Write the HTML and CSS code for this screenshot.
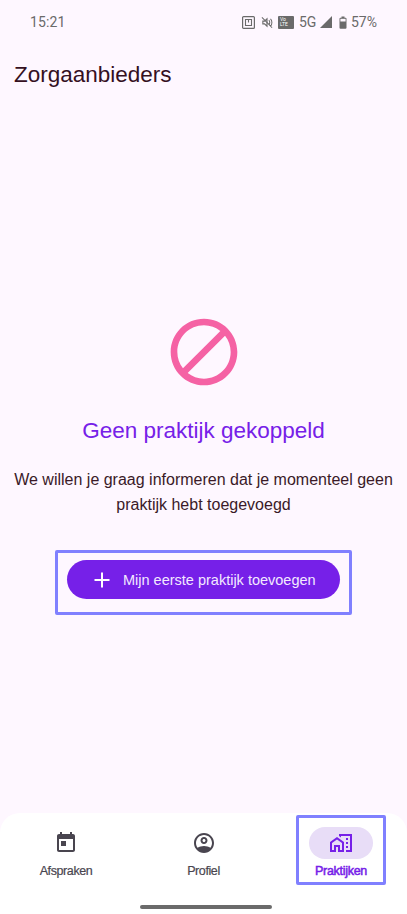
FILE: index.html
```html
<!DOCTYPE html>
<html lang="nl">
<head>
<meta charset="utf-8">
<title>Zorgaanbieders</title>
<link rel="stylesheet" href="styles.css">
</head>
<body>
<div class="app">
  <div class="status">
    <span class="time">15:21</span>
    <div class="status-icons">
      <svg class="si-nfc" width="13" height="13" viewBox="0 0 13 13"><rect x="0.6" y="0.6" width="11.8" height="11.8" rx="1" fill="none" stroke="#6a6a6a" stroke-width="1.2"/><path d="M3.500 3.500h6v6h-6zM6.500 3.500v3" fill="none" stroke="#6a6a6a" stroke-width="1.100"/></svg>
      <svg class="si-mute" width="12" height="13" viewBox="0 0 13 13"><path d="M2 5h1.800l2.700-2.500v8L3.800 8H2z" fill="none" stroke="#6a6a6a" stroke-width="1.200"/><path d="M8.500 4c1.300 1.200 1.300 3.800 0 5M10.300 2.500c2 2 2 6 0 8M1 1l11 11" fill="none" stroke="#6a6a6a" stroke-width="1.100"/></svg>
      <span class="volte"><span>Vo</span><span>LTE</span></span>
      <span class="net">5G</span>
      <svg class="si-signal" width="12" height="12" viewBox="0 0 12 12"><path d="M0 12L12 0v12z" fill="#6a6a6a"/></svg>
      <svg class="si-batt" width="8" height="13" viewBox="0 0 8 13"><path d="M2.500 0.500h3v1.200h1a1 1 0 0 1 1 1v9a1 1 0 0 1-1 1h-5a1 1 0 0 1-1-1v-9a1 1 0 0 1 1-1h1z" fill="#6a6a6a"/><rect x="1.400" y="2.800" width="5.200" height="2.700" fill="#fef7ff"/></svg>
      <span class="pct">57%</span>
    </div>
  </div>
  <header class="header">Zorgaanbieders</header>
  <main class="main">
    <svg class="block-icon" viewBox="0 0 24 24"><path d="M12 2C6.480 2 2 6.480 2 12s4.480 10 10 10 10-4.480 10-10S17.520 2 12 2zM4 12c0-4.420 3.580-8 8-8 1.850 0 3.550.63 4.900 1.690L5.690 16.900C4.630 15.550 4 13.850 4 12zm8 8c-1.850 0-3.550-.63-4.900-1.690L18.310 7.100C19.370 8.450 20 10.150 20 12c0 4.420-3.580 8-8 8z"/></svg>
    <h1 class="title">Geen praktijk gekoppeld</h1>
    <p class="text">We willen je graag informeren dat je momenteel geen praktijk hebt toegevoegd</p>
    <div class="highlight-btn">
      <button class="cta">
        <svg class="plus" viewBox="0 0 16 16"><path d="M8 0.500v15M0.500 8h15"/></svg>
        <span>Mijn eerste praktijk toevoegen</span>
      </button>
    </div>
  </main>
  <nav class="nav">
    <div class="tab">
      <div class="pill"><svg class="tab-icon" viewBox="0 0 24 24"><path d="M19 3h-1V1h-2v2H8V1H6v2H5c-1.110 0-1.990.9-1.990 2L3 19c0 1.100.89 2 2 2h14c1.100 0 2-.9 2-2V5c0-1.100-.9-2-2-2zm0 16H5V8h14v11zM7 10h5v5H7z"/></svg></div>
      <span class="label">Afspraken</span>
    </div>
    <div class="tab">
      <div class="pill"><svg class="tab-icon" viewBox="0 0 24 24"><path fill-rule="evenodd" d="M12 2C6.480 2 2 6.480 2 12s4.480 10 10 10 10-4.480 10-10S17.520 2 12 2zm0 2c4.420 0 8 3.580 8 8 0 1.800-.6 3.500-1.600 4.800C16.700 15.700 14.400 15 12 15s-4.700.7-6.400 1.800C4.600 15.500 4 13.800 4 12c0-4.420 3.580-8 8-8zm0 2c-1.930 0-3.500 1.570-3.500 3.500S10.070 13 12 13s3.500-1.570 3.500-3.500S13.930 6 12 6zm0 2c.83 0 1.500.67 1.500 1.500S12.830 11 12 11s-1.500-.67-1.500-1.500S11.170 8 12 8z"/></svg></div>
      <span class="label">Profiel</span>
    </div>
    <div class="tab tab-active">
      <div class="pill"><svg class="tab-icon" viewBox="0 0 24 24"><path d="M17 7h2v2h-2zM17 11h2v2h-2zM17 15h2v2h-2zM1 11v10h6v-5h2v5h6V11L8 6l-7 5zm12 8h-2v-5H5v5H3v-7l5-3.500 5 3.500v7zM10 3v1.970l2 1.430V5h9v14h-4v2h6V3z"/></svg></div>
      <span class="label">Praktijken</span>
    </div>
    <div class="home-bar"></div>
  </nav>
</div>
</body>
</html>
```
FILE: styles.css
```css
* { box-sizing: border-box; }
html, body { margin: 0; padding: 0; }
body { background: #fef7ff; font-family: "Liberation Sans", Arial, sans-serif; }
.app { width: 407px; height: 914px; display: flex; flex-direction: column; overflow: hidden; background: #fef7ff; }

.status { height: 44px; flex: none; display: flex; align-items: center; justify-content: space-between; padding: 0 30px; font-family: Roboto, sans-serif; color: #6a6a6a; font-size: 14px; }
.time { letter-spacing: 0.1px; }
.status-icons { display: flex; align-items: center; }
.si-mute { margin-left: 6px; }
.volte { width: 16px; height: 13px; background: #6a6a6a; border-radius: 1px; color: #fff; font-size: 5px; line-height: 5.500px; display: flex; flex-direction: column; padding: 1px 0 0 2px; margin-left: 5px; }
.net { margin-left: 5px; width: 16px; font-size: 14px; white-space: nowrap; }
.si-signal { margin-left: 5px; }
.si-batt { margin-left: 7px; }
.pct { margin-left: 4px; }

.header { height: 62px; flex: none; display: flex; align-items: center; padding: 0 14px; font-size: 22.500px; color: #35101f; }

.main { flex: 1; display: flex; flex-direction: column; align-items: center; padding-top: 206px; }
.block-icon { width: 80px; height: 80px; fill: #f562a4; display: block; }
.title { margin: 20px 0 0; font-size: 22.500px; line-height: 37px; font-weight: 400; color: #7620e8; }
.text { margin: 18px 0 0; width: 395px; text-align: center; font-size: 16px; line-height: 25px; color: #3a1a28; }
.highlight-btn { margin-top: 33px; width: 297px; height: 65px; border: 3px solid #8080ff; border-radius: 2px; display: flex; align-items: flex-start; padding: 7px 0 0 9px; }
.cta { width: 273px; height: 39px; border: 0; border-radius: 20px; background: #7620e8; color: #f3e9ff; font-family: "Liberation Sans", Arial, sans-serif; font-size: 14.500px; display: flex; align-items: center; padding: 0 0 0 27px; gap: 13px; }
.plus { width: 16px; height: 16px; flex: none; fill: none; stroke: #fff; stroke-width: 2; }

.nav { position: relative; flex: none; height: 101px; background: #fff; border-radius: 20px 20px 0 0; display: flex; justify-content: space-between; align-items: flex-start; padding: 2px 21px 0; }
.tab { width: 90px; height: 70px; display: flex; flex-direction: column; align-items: center; padding-top: 9px; color: #49454f; border: 3px solid transparent; border-radius: 2px; }
.pill { width: 64px; height: 32px; flex: none; border-radius: 16px; display: flex; align-items: center; justify-content: center; }
.tab-icon { width: 24px; height: 24px; fill: currentColor; display: block; }
.label { margin-top: 4px; font-size: 12.500px; line-height: 16px; letter-spacing: -0.4px; -webkit-text-stroke: 0.2px currentColor; white-space: nowrap; }
.tab-active { border-color: #8080ff; color: #7620e8; }
.tab-active .pill { background: #e8ddf7; }
.tab-active .label { -webkit-text-stroke: 0.5px currentColor; letter-spacing: -0.3px; }
.home-bar { position: absolute; left: 140px; bottom: 5px; width: 132px; height: 4px; border-radius: 2px; background: #6b6b6b; }
```
